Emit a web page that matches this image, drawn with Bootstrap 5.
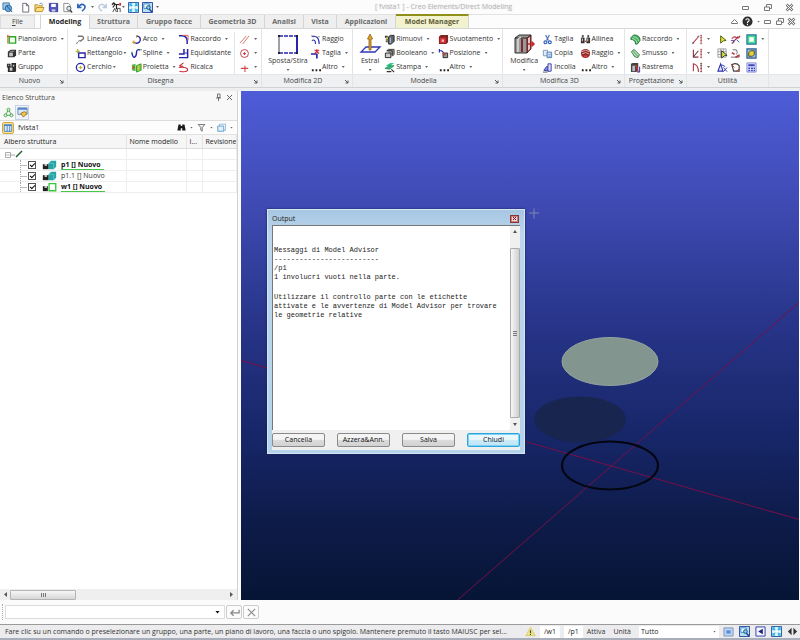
<!DOCTYPE html>
<html lang="it">
<head>
<meta charset="utf-8">
<meta name="viewport" content="width=device-width, initial-scale=1">
<title>Creo Elements/Direct Modeling</title>
<link href="https://cdn.jsdelivr.net/npm/bootstrap@5.3.0/dist/css/bootstrap.min.css" rel="stylesheet">
<style>
body{font-family:"Open Sans","Noto Sans",sans-serif;font-size:7px;line-height:10px;color:#333;background:#fcfcfc}
button,input,select{font:inherit;color:inherit}
button{border:0;background:none;padding:0}
.ic{width:11px;height:11px;flex:none;display:block}
.ic-sm{width:9px;height:9px;flex:none;display:block}
.ic-lg{width:24px;height:24px;flex:none;display:block}
.crt{width:3px;height:2px;flex:none;background:#666;clip-path:polygon(0 0,100% 0,50% 100%)}
.titlebar{display:grid;grid-template-columns:375px 1fr auto;align-items:center;height:14px}
.apptitle{color:#b4b4b4;text-shadow:0 0 2px #ddd;white-space:nowrap}
.qat{gap:3px;padding-left:2px}
.wins{gap:13px;padding-right:6px}
.vwins{gap:3px;padding-right:4px}
.tabs{display:grid;grid-template-columns:35px 5px 50px 48px 63px 64px 39px 33px 59px 73px 1fr;height:15px;border-bottom:1px solid #d4d7da;border-top:1px solid #e2e2e2}
.tb{display:flex;align-items:center;justify-content:center;color:#6a6a6a;font-weight:700;text-decoration:none;background:#efefef;border-right:1px solid #d5d5d5;white-space:nowrap}
.tb.file{font-weight:400;color:#444;border:1px solid #ddd;border-bottom:0}
.tb.on{background:#fff;color:#222;border-left:1px solid #d5d5d5;margin-bottom:-1px}
.tb.mm{background:#f3f2cf;color:#5c5a35;border-top:2px solid #8f8f1c;margin-top:-1px}
.ribbon{display:grid;grid-template-columns:68fr 194fr 91fr 150fr 122fr 62fr 82fr 31fr;height:59px;background:#fff;border-bottom:1px solid #cfd3d6}
.grp{display:flex;flex-direction:column;border-right:1px solid #e2e4e6;min-width:0}
.grpbody{display:grid;flex:1;padding-top:3px}
.grpname{height:13px;background:#eef0f2;border-top:1px solid #e3e5e8;display:flex;align-items:center;justify-content:center;position:relative;color:#444}
.launch{position:absolute;right:3px;top:4px;width:5px;height:5px}
.launch svg{display:block;width:5px;height:5px}
.g-nuovo{grid-template-columns:1fr;padding-left:6px}
.g-dis{grid-template-columns:56fr 48fr 56fr 27fr;padding-left:7px}
.g-m2{grid-template-columns:44fr 42fr;padding-left:4px}
.g-mod{grid-template-columns:28fr 53fr 64fr;padding-left:3px}
.g-m3{grid-template-columns:36fr 37fr 44fr;padding-left:3px}
.g-pro{grid-template-columns:1fr;padding-left:5px}
.g-uti{grid-template-columns:25fr 14fr 16fr 22fr;padding-left:5px}
.stack{display:flex;flex-direction:column;min-width:0}
.stack.sep{border-left:1px solid #e2e4e6;padding-left:4px}
.tool{display:flex;align-items:center;height:14px;gap:1px;white-space:nowrap}
.tool .crt{margin-left:3px}
.big{display:flex;flex-direction:column;align-items:center;height:40px;white-space:nowrap}
.big .crt{margin-top:3px}
.work{flex:1;min-height:0;padding-top:3px;background:linear-gradient(#eceef0 3px,#fcfcfc 3px)}
.panel{width:238px;flex:none;background:#fff;border-right:1px solid #d2d2d2;margin-right:3px;display:flex;flex-direction:column}
.phead{height:13px;padding:0 3px 0 2px;gap:2px;background:#f8f8f8;color:#444}
.ptabs{height:17px;padding:1px;background:#f8f8f8;border-bottom:1px solid #ddd}
.ptab{width:14px;height:15px;display:grid;place-items:center}
.ptab.on{border:1px solid #c9d2e4;background:#edf2fb}
.pbar{height:13px;padding:0 4px 0 2px;gap:4px;background:#fdfdfd;color:#222}
.chip{width:12px;height:12px;border:1px solid #d7a83c;background:#fbe3a0;border-radius:2px}
.chip .ic{width:10px;height:10px}
.tree{width:100%;table-layout:fixed;border-collapse:collapse;color:#333}
.tree th{height:14px;font-weight:400;padding:0 0 0 4px;background:#f6f6f6;border-top:1px solid #e2e2e2;border-bottom:1px solid #dcdcdc;border-right:1px solid #e4e4e4;white-space:nowrap;overflow:hidden;color:#222}
.tree th:not(:first-child){padding-left:3px}
.c-name{width:126px}
.c-model{width:60px}
.c-inst{width:16px}
.tree td{height:11px;padding:0;border-right:1px solid #eee;border-bottom:1px solid #eee;line-height:10px}
.node{display:flex;align-items:center;height:10px;padding-left:20px}
.node .twig{width:7px;align-self:stretch;border-left:1px dotted #aaa;background:linear-gradient(#bbb,#bbb) 0 5px/6px 1px no-repeat}
.node .duo{width:15px;height:10px;margin:0 4px 0 6px}
.node b{color:#111;border-bottom:1px solid #46c846;line-height:8px;padding-right:3px}
.ck{appearance:none;width:8px;height:8px;margin:0 0 0 1px;border:1px solid #555;background:#fff;display:grid;place-items:center}
.ck:checked::after{content:"";width:5px;height:3px;border:solid #111;border-width:0 0 1px 1px;transform:rotate(-45deg);margin-bottom:2px}
.hbar{height:11px;background:#efefef;padding:1px 3px;gap:3px}
.hthumb{width:66px;height:10px;gap:1px;border:1px solid #b4b4b4;border-radius:1px;background:linear-gradient(#f7f7f7,#d6d6d6)}
.ar{width:4px;height:5px;background:#555;flex:none}
.ar.l{clip-path:polygon(100% 0,100% 100%,25% 50%)}
.ar.r{clip-path:polygon(0 0,0 100%,75% 50%)}
.ar.u{height:3px;clip-path:polygon(0 100%,100% 100%,50% 0)}
.ar.d{height:3px;clip-path:polygon(0 0,100% 0,50% 100%)}
.view{flex:1;position:relative;min-width:0;margin-right:1px;overflow:hidden;background:linear-gradient(#4e5cd8 0%,#3f4bb3 22%,#28358a 45%,#172668 68%,#0d1b48 85%,#061535 100%)}
.scene{position:absolute;inset:0;width:100%;height:100%}
.dlg{position:absolute;left:26px;top:118px;width:258px;background:linear-gradient(#a6c6e2,#bcd6ec 10%,#b4d3ea);border:1px solid #d5e6f3;padding:0 4px 3px;color:#222;box-shadow:0 0 2px #141e50}
.dhead{height:15px;padding:2px 1px 0 0}
.dclose{width:9px;height:8px;border:1px solid #8d3434;background:#f0dcdc;display:grid;place-items:center;box-shadow:inset 0 0 0 1px #cf7a76}
.dclose svg{width:5px;height:5px}
.dbody{background:#f0f0f0}
.out{height:205px;background:#fff;border:1px solid #777;border-right:0;border-bottom:0;display:flex}
.log{flex:1;font-family:"Liberation Mono",monospace;font-size:7px;line-height:9px;padding:20px 0 0 1px;color:#222;white-space:pre}
.log p{margin:0 0 11px}
.vbar{width:10px;background:#f0f0f0;padding:4px 0;gap:3px}
.vthumb{width:10px;flex:1;margin:12px 0 2px;border:1px solid #aaa;border-radius:1px;background:linear-gradient(90deg,#f7f7f7,#cfcfcf);display:grid;place-items:center;align-content:center;gap:1px}
.vthumb i{width:4px;height:1px;background:#777}
.hthumb i{width:1px;height:4px;background:#777}
.dbtns{padding:3px 0;display:grid;grid-template-columns:53px 53px 53px 53px;justify-content:space-between}
.dbtn{height:14px;border:1px solid #8a8a8a;border-radius:2px;background:linear-gradient(#f4f4f4 45%,#dcdcdc 50%,#d2d2d2);color:#111}
.dbtn.def{border-color:#2ca4dc;background:linear-gradient(#eaf7fd 45%,#cdebf9 50%,#bfe4f5);box-shadow:inset 0 0 0 1px #7fd4f5}
.cmd{height:24px;padding:0 5px 0 2px;gap:1px;background:#fbfbfb}
.grip{width:2px;height:16px;border-left:1px dotted #aaa}
.combo{width:220px;height:14px;border:1px solid #ddd;background:#fff}
.combo input{border:0;flex:1;min-width:0;height:12px;padding:0 3px;outline:0;background:none}
.combo .ar{width:5px;background:#111}
.cbtn{height:14px;width:16px;border:1px solid #ccc;border-radius:2px;display:grid;place-items:center}
.status{height:16px;background:#ececee;border-top:1px solid #9a9a9a;border-bottom:2px solid #a9aebb;padding:0 2px 0 5px}
.msg{flex:1;min-width:0;overflow:hidden;white-space:nowrap;text-overflow:ellipsis}
.cell{background:#fff;height:12px;padding:1px 4px;color:#222}
.sel{appearance:none;width:80px;height:12px;border:0;border-radius:0;padding:0 2px;background:#fff;color:#222}
.selbox{position:relative}
.selbox .crt{position:absolute;right:3px;top:5px}
.views{gap:5px}
</style>
<script src="https://cdn.jsdelivr.net/npm/bootstrap@5.3.0/dist/js/bootstrap.bundle.min.js"></script>
</head>
<body class="vh-100 d-flex flex-column overflow-hidden">
<svg class="d-none" aria-hidden="true">
<symbol id="app" viewBox="0 0 12 12"><path d="M1 1h7v7H1z" fill="#9cc7e6" stroke="#3b79ad"/><circle cx="7" cy="7" r="3.500" fill="#67aadb" stroke="#2a6397"/><path d="M5 4l6 7" stroke="#234f88"/></symbol>
<symbol id="new" viewBox="0 0 12 12"><path d="M3 1.500h4l2.500 2.500v7H3z" fill="#fff" stroke="#667"/><path d="M7 1.500V4h2.500" fill="none" stroke="#667"/></symbol>
<symbol id="open" viewBox="0 0 12 12"><path d="M1 10V3h3l1 1h4v2" fill="#f6d67c" stroke="#b98e2f"/><path d="M1 10.500l2-4.500h8l-2 4.500z" fill="#ffdf7e" stroke="#b98e2f"/><path d="M6 2q2-2 4 1" fill="none" stroke="#5b8fbd"/></symbol>
<symbol id="save" viewBox="0 0 12 12"><path d="M1.500 1.500h9v9h-8l-1-1z" fill="#5055c0" stroke="#34388f"/><path d="M3.500 2h5v3.500h-5z" fill="#fff"/><path d="M4 8h4v2.500H4z" fill="#ccd"/></symbol>
<symbol id="prev" viewBox="0 0 12 12"><path d="M2 1.500h5l2 2v7H2z" fill="#fff" stroke="#888"/><circle cx="7.500" cy="7" r="2.300" fill="#d9e8f3" stroke="#555"/><path d="M9 9l2 2.500" stroke="#444" stroke-width="1.500"/></symbol>
<symbol id="undo" viewBox="0 0 12 12"><path d="M2 2v4h4M2.500 5.500q4-5 7-1.500 1.500 3-3 6" fill="none" stroke="#2c64b8" stroke-width="1.800"/></symbol>
<symbol id="redo" viewBox="0 0 12 12"><path d="M10 2v4H6M9.500 5.500q-4-5-7-1.500-1.500 3 3 6" fill="none" stroke="#b7c6da" stroke-width="1.500"/></symbol>
<symbol id="axis" viewBox="0 0 12 12"><path d="M1 3l2-2 2 2M3 2l6 1M6 3v5M2 6l2-3" stroke="#222" stroke-width="1.300" fill="none"/><path d="M2 11l2-4 2 4M7 11V7h3v4" stroke="#444" fill="none"/><path d="M9 1h2v3H9z" fill="#c33"/></symbol>
<symbol id="fit" viewBox="0 0 12 12"><path d="M.5.5h11v11H.5z" fill="#dff6ff" stroke="#23509d"/><path d="M2 4.500V2h2.500M7.500 2H10v2.500M10 7.500V10H7.500M4.500 10H2V7.500M2.500 2.500l7 7M9.500 2.500l-7 7" fill="none" stroke="#2bb0e6" stroke-width="1.200"/><path d="M4.500 4.500h3v3h-3z" fill="#fff"/></symbol>
<symbol id="zoomw" viewBox="0 0 12 12"><path d="M.5.5h11v11H.5z" fill="#b9dff3" stroke="#2341a0"/><path d="M2 2h6v5H2z" fill="#e9f8ff" stroke="#3b8cc0"/><circle cx="7" cy="6" r="2" fill="#8cc6e6" stroke="#14508b"/><path d="M8 8l3 3" stroke="#14408b" stroke-width="1.500"/></symbol>
<symbol id="wp" viewBox="0 0 12 12"><path d="M3.500 3h7v7h-7z" fill="#f2fdee" stroke="#29ab29" stroke-width="1.500"/><path d="M2 1v9.500M1 2.500h4" stroke="#b55c22" fill="none"/></symbol>
<symbol id="part" viewBox="0 0 12 12"><path d="M2 4l3-2h6v6l-2 2H2z" fill="#333"/><path d="M3.500 5h4v4h-4z" fill="#c4c4c4"/><path d="M5 3h4.500L8.500 4H4z" fill="#999"/></symbol>
<symbol id="group" viewBox="0 0 12 12"><path d="M1 2h4v3h1V1h5v9l-1 1H2V6H1z" fill="#2b2b2b"/><path d="M4 6h3v3.500H4zM7.500 3H9v2H7.500zM2 3h1.500v1H2z" fill="#ccc"/></symbol>
<symbol id="line" viewBox="0 0 12 12"><path d="M1.500 10.500L5 7" stroke="#777" stroke-width="1.300" stroke-dasharray="2 1"/><path d="M3 2.500h5q2 1 1 3L5.500 8" fill="none" stroke="#777" stroke-width="1.500"/></symbol>
<symbol id="rect" viewBox="0 0 12 12"><path d="M4 5.500h7v5H4z" fill="#fff" stroke="#2424ac" stroke-width="1.500"/><path d="M3 1v5M.5 3.500h5" stroke="#a5b02d" stroke-width="1.200"/></symbol>
<symbol id="circ" viewBox="0 0 12 12"><circle cx="6" cy="6" r="4.500" fill="none" stroke="#2424ac" stroke-width="1.400"/><path d="M6 4v4M4 6h4" stroke="#c2b022" stroke-width="1.300"/></symbol>
<symbol id="arc" viewBox="0 0 12 12"><path d="M6 2q5 1 4 5-2 5-7 2" fill="none" stroke="#2424ac" stroke-width="1.500"/><path d="M1 9h4M3 7v4M6 1v3" stroke="#d1a022" stroke-width="1.200"/></symbol>
<symbol id="spline" viewBox="0 0 12 12"><path d="M1 5q1 6 3 5t2-5 4-3" fill="none" stroke="#2424ac" stroke-width="1.500"/><path d="M9 2h3M1 4v3" stroke="#2a9a6a"/></symbol>
<symbol id="proj" viewBox="0 0 12 12"><path d="M1 3l4-1v8l-4-1z" fill="#58b748"/><path d="M6 4l5-2v7l-5 2z" fill="#7ed045" stroke="#3c9232"/><path d="M1.500 6H4" stroke="#d4451f" stroke-width="2"/><path d="M8 4v5" stroke="#e6d23a"/></symbol>
<symbol id="fillet" viewBox="0 0 12 12"><path d="M1 2h3q6 0 6 6v3" fill="none" stroke="#2424ac" stroke-width="1.600"/><path d="M5 1.500h6V7" fill="none" stroke="#d54"/></symbol>
<symbol id="offset" viewBox="0 0 12 12"><path d="M1 6.500h5.500V1M1 10.500h9.500V1" fill="none" stroke="#2424ac" stroke-width="1.600"/><path d="M7 5.500h3" stroke="#2424ac"/></symbol>
<symbol id="trace" viewBox="0 0 12 12"><path d="M1 6l4-2" stroke="#666"/><path d="M1 6q10-1 9.500 3-1 2.500-9 1M6 1L2 4l5 2" fill="none" stroke="#cf2937" stroke-width="1.200"/></symbol>
<symbol id="constr" viewBox="0 0 12 12"><path d="M1 10L8 2M4 11l7-9" stroke="#cf7060"/></symbol>
<symbol id="ccirc" viewBox="0 0 12 12"><circle cx="6" cy="6" r="4.300" fill="none" stroke="#c6363e"/><path d="M4.500 6h3M6 4.500v3" stroke="#c6363e" stroke-width="1.300"/></symbol>
<symbol id="cpoint" viewBox="0 0 12 12"><path d="M2 7h8M6.500 4v7" stroke="#d0474a" stroke-width="1.200"/></symbol>
<symbol id="stretch" viewBox="0 0 24 24"><path d="M3 4h18v17H3z" fill="#fdfdff"/><path d="M3 4h18M3 21h18" stroke="#2424ac" stroke-width="1.500" stroke-dasharray="4 1"/><path d="M21 4v17" stroke="#2424ac" stroke-width="2"/><path d="M3 4v17" stroke="#444"/><path d="M2 3h2v2H2zM20 3h2v2h-2zM2 20h2v2H2zM20 20h2v2h-2z" fill="#222"/></symbol>
<symbol id="rad2" viewBox="0 0 12 12"><path d="M2 3q8-2 8 8M2 7q4-2 4 4" fill="none" stroke="#2a2aae" stroke-width="1.200"/><path d="M1 2h4M8 3h3" stroke="#999"/></symbol>
<symbol id="trim" viewBox="0 0 12 12"><path d="M1 6.500h6M7.500 6v5.500" stroke="#2424ac" stroke-width="1.800"/><path d="M5 2l5 4M10 2L5 6M7.500 1v4" stroke="#d12c3a" stroke-width="1.200"/></symbol>
<symbol id="dots" viewBox="0 0 12 12"><path d="M2 8h2v2H2zM6 8h2v2H6zM10 8h2v2h-2z" fill="#222"/></symbol>
<symbol id="pull" viewBox="0 0 24 24"><path d="M8 15h14l-5 5H3z" fill="#fff" stroke="#2f37b8" stroke-width="1.300"/><path d="M12 2l2.500 5H13v11h-2V7H9.500z" fill="#e5a321" stroke="#8b5d12" stroke-width=".8"/></symbol>
<symbol id="remove" viewBox="0 0 12 12"><path d="M1 2h3v2H1zM2 5h2v4H2z" fill="#333"/><path d="M5 3l2-1.500h4V8l-3 3H5z" fill="#666" stroke="#222"/><path d="M7 4v6" stroke="#8fb6e0" stroke-width="1.500"/><path d="M3 3v5" stroke="#cc3"/></symbol>
<symbol id="bool" viewBox="0 0 12 12"><path d="M3 3l2-1.500h6V7L9 9" fill="#aaa" stroke="#333"/><path d="M1.500 5.500h6v5h-6z" fill="#ccc" stroke="#222"/><path d="M3 3h6v5" fill="none" stroke="#222"/></symbol>
<symbol id="stamp" viewBox="0 0 12 12"><path d="M2 4l5-3h4L6 5z" fill="#2dc77e"/><path d="M1 7l5-3h5L6 8z" fill="#36b38f" stroke="#183" stroke-width=".7"/><path d="M3 10.500h5M8 8l3 3" stroke="#333" fill="none" stroke-width="1.300"/></symbol>
<symbol id="shell" viewBox="0 0 12 12"><path d="M1 3l2-2h8v8l-2 2H1z" fill="#7c2525"/><path d="M2 4h6.500v6H2z" fill="#d5313a"/><path d="M4 6h2.500v2.500H4z" fill="#fbb"/></symbol>
<symbol id="pos" viewBox="0 0 12 12"><path d="M5.500 5.500h5v5h-5z" fill="#999" stroke="#222"/><path d="M1.500 1v4M1 3h3l2 2" stroke="#2433b4" fill="none" stroke-width="1.300"/><path d="M5 5l3 3" stroke="#c33" stroke-width="1.500"/></symbol>
<symbol id="modify" viewBox="0 0 24 24"><path d="M3 6l4-3h12v14l-4 4H3z" fill="#999" stroke="#333"/><path d="M3 6h12v15M15 6l4-3" stroke="#222" fill="none"/><path d="M6 7v13M9 5l-3 2" stroke="#ddd" stroke-width="1.500"/><path d="M10 7v13" stroke="#7c2a2a" stroke-width="2"/><path d="M15.500 6l3-2v13l-3 3z" fill="#e9c4c4" stroke="#822"/><path d="M16 12h6M19.500 9.500L22 12l-2.500 2.500" stroke="#c62828" stroke-width="1.500" fill="none"/></symbol>
<symbol id="cut" viewBox="0 0 12 12"><path d="M4 1l3 6M8 1L5 7" stroke="#4a72b5" stroke-width="1.300"/><circle cx="3.800" cy="9" r="1.600" fill="none" stroke="#2c62bb" stroke-width="1.300"/><circle cx="8.500" cy="9" r="1.600" fill="none" stroke="#2c62bb" stroke-width="1.300"/></symbol>
<symbol id="copy" viewBox="0 0 12 12"><path d="M1.500 2.500h4.500v6H1.500z" fill="#e0ecf7" stroke="#7898b8"/><path d="M5.500 4.500h5v6h-5z" fill="#cfe4f8" stroke="#4a78b0"/><path d="M7 7h2.500M7 9h2.500" stroke="#4a78b0" stroke-width=".7"/></symbol>
<symbol id="paste" viewBox="0 0 12 12"><path d="M2 9l3-4h3v5z" fill="#7c8bdb" stroke="#333a9e"/><path d="M6.500 2H10v8H6.500z" fill="#dfe3fa" stroke="#333a9e"/><path d="M1 11h5" stroke="#555"/></symbol>
<symbol id="align" viewBox="0 0 12 12"><path d="M1 4h4v6H1zM7 4h4v6H7z" fill="#333"/><path d="M2 1h2v3H2zM8 1h2v3H8z" fill="#555"/><path d="M5 8h2" stroke="#c33" stroke-width="1.500"/><path d="M2 5h1v3H2zM8 5h1v3H8z" fill="#eee"/></symbol>
<symbol id="rad3" viewBox="0 0 12 12"><circle cx="6" cy="6" r="5" fill="#8a2a2a"/><path d="M2 4q4-3 8 0M2 6.500q4-3 8 0" stroke="#f3b0a8" fill="none"/><path d="M4 8h4v2H4z" fill="#e04040"/></symbol>
<symbol id="round" viewBox="0 0 12 12"><path d="M1 4l3-3q7 0 7 6l-3 4H6q0-5-5-5z" fill="#3fae5b" stroke="#2b6e3c"/><path d="M2 5q5 0 5.500 5M3.500 3q5 0 6 5" stroke="#b6efc2" fill="none"/></symbol>
<symbol id="chamf" viewBox="0 0 12 12"><path d="M1.500 4l3-2.500 6 6-2 3-3.500-1z" fill="#74bd83" stroke="#4b7b58"/><path d="M2.500 4.500l5 5M4.500 3l5 5" stroke="#d5f3da"/></symbol>
<symbol id="draft" viewBox="0 0 12 12"><path d="M1 2l2-1h6v8l-2 2H1z" fill="#444"/><path d="M2.500 4h3v6h-3z" fill="#bbb"/><path d="M6.500 3l2.500 8" stroke="#c33" stroke-width="1.500"/><path d="M10.500 5v6H8" stroke="#22a" fill="none"/></symbol>
<symbol id="m1" viewBox="0 0 12 12"><path d="M1 10l6-7" stroke="#b33a4a" stroke-width="1.200"/><path d="M0 10h2M6 2.500h2" stroke="#444"/><path d="M10 1v10M9 1.500h2M9 4h2M9 7h2M9 10.500h2" stroke="#b55a5a"/></symbol>
<symbol id="m2" viewBox="0 0 12 12"><path d="M1.500 2v8H7M2 9l5-6" stroke="#7c3346" fill="none" stroke-width="1.200"/><path d="M10 1v10M9 1.500h2M9 4h2M9 7h2M9 10.500h2" stroke="#b55a5a"/></symbol>
<symbol id="m3" viewBox="0 0 12 12"><path d="M1.500 10V2q5.500 1 5.500 9" stroke="#b0354a" fill="none" stroke-width="1.200"/><path d="M10 1v10M9 1.500h2M9 4h2M9 7h2M9 10.500h2" stroke="#8b4a4a"/></symbol>
<symbol id="m4" viewBox="0 0 12 12"><path d="M4 2l6 5-3 .5L4 10z" fill="#d9e32c" stroke="#4d5516"/></symbol>
<symbol id="m5" viewBox="0 0 12 12"><path d="M1 1h9v9H1zM1 4h9M1 7h9M4 1v9M7 1v9" fill="#fff" stroke="#999"/><path d="M5 3l6 5-3 .5L5 11z" fill="#d9e32c" stroke="#333"/></symbol>
<symbol id="m6" viewBox="0 0 12 12"><path d="M4 2l2.500 8H1z" fill="#e5e8ff" stroke="#2a30ac" stroke-width="1.200"/><path d="M7 6l4 4.500M11 6l-4 4.500M5 3l4 2" stroke="#2a30ac"/></symbol>
<symbol id="m7" viewBox="0 0 12 12"><path d="M2 5q3-3 5-1t4-2M2 10.500l7-8" stroke="#b03344" fill="none" stroke-width="1.200"/><path d="M1 7h3v3M7 6l3 3" stroke="#2e46b5" fill="none"/></symbol>
<symbol id="m8" viewBox="0 0 12 12"><path d="M3 2h4q2 3 0 5M1 10h9V7" stroke="#666" fill="none"/><path d="M2 5l3 2M6 10l4-2" stroke="#c12e3e" stroke-width="1.800" fill="none"/></symbol>
<symbol id="m9" viewBox="0 0 12 12"><path d="M2 3q5-3 8 1v6H4z" fill="none" stroke="#444" stroke-width="1.300"/><path d="M1 2l4 4M7 10l4-3" stroke="#c33"/></symbol>
<symbol id="m10" viewBox="0 0 12 12"><path d="M1 1h10v10H1z" fill="#3fe08a" stroke="#2d6fa8" stroke-width="1.300"/><path d="M3.500 3.500h5v5h-5z" fill="#fff"/></symbol>
<symbol id="m11" viewBox="0 0 12 12"><path d="M1 1h10v10H1z" fill="#9db8cc" stroke="#2d5f98" stroke-width="1.300"/><path d="M3 5l2-2h4v4L7 9H3z" fill="#e0d52c" stroke="#444"/></symbol>
<symbol id="m12" viewBox="0 0 12 12"><path d="M1 1h10v10H1z" fill="#e3e7ff" stroke="#7c86d8"/><path d="M2.500 2.500h7v2h-7zM2.500 6h2v1.500h-2zM5.500 6h2v1.500h-2zM8.300 6h1.500v1.500H8.300zM2.500 8.500h2V10h-2zM5.500 8.500h2V10h-2zM8.300 8.500h1.500V10H8.300z" fill="#3a45b8"/></symbol>
<symbol id="min" viewBox="0 0 9 9"><path d="M1.500 3.500h6v3h-6z" fill="#fff" stroke="#777"/></symbol>
<symbol id="rest" viewBox="0 0 9 9"><path d="M3.500 1.500h5v4h-5z" fill="#fff" stroke="#777"/><path d="M1.500 4h5v3.500h-5z" fill="#fff" stroke="#777"/></symbol>
<symbol id="cls" viewBox="0 0 12 12"><path d="M2 2l8 8M10 2l-8 8" stroke="#777" stroke-width="3.500"/><path d="M2.200 2.200l7.600 7.600M9.800 2.200L2.200 9.800" stroke="#fff" stroke-width="1.300"/></symbol>
<symbol id="up" viewBox="0 0 9 9"><path d="M1.500 6.500v-1L4.500 2.500l3 3v1z" fill="#fff" stroke="#777"/></symbol>
<symbol id="help" viewBox="0 0 12 12"><circle cx="6" cy="6" r="5.500" fill="#2d2d2d"/><path d="M4.200 4.700Q4.300 3 6 3t1.800 1.500Q7.800 5.500 6 6.500V7.500M6 8.500V10" stroke="#fff" stroke-width="1.200" fill="none"/></symbol>
<symbol id="pin" viewBox="0 0 9 9"><path d="M3.500 1v3.500h2.500V1zM2 5h5M4.500 5v3" fill="none" stroke="#666" stroke-width=".9"/></symbol>
<symbol id="x" viewBox="0 0 9 9"><path d="M2 2l5 5M7 2L2 7" stroke="#666"/></symbol>
<symbol id="tri" viewBox="0 0 12 12"><path d="M6 3L2.500 9h7z" fill="none" stroke="#43a047"/><circle cx="6" cy="3" r="1.600" fill="#e3f6df" stroke="#43a047"/><circle cx="2.700" cy="9" r="1.600" fill="#e3f6df" stroke="#43a047"/><circle cx="9.300" cy="9" r="1.600" fill="#e3f6df" stroke="#43a047"/></symbol>
<symbol id="brush" viewBox="0 0 12 12"><path d="M1 1h10v7H1z" fill="#dce9fa" stroke="#6686b4"/><path d="M1 1h10v2H1z" fill="#5785c8"/><path d="M4 7l4-2 3 2-4 4z" fill="#f0c44b" stroke="#9b751c"/></symbol>
<symbol id="cols" viewBox="0 0 12 12"><path d="M1.500 2h9v8h-9z" fill="#dcecfb" stroke="#3f78b8"/><path d="M1.500 3h9M5 3v7M8 3v7" stroke="#3f78b8"/></symbol>
<symbol id="sheet" viewBox="0 0 12 12"><path d="M3.500 1.500h8v8h-8z" fill="#fff" stroke="#7da6d0"/><path d="M1 4h8v7H1z" fill="#e3f0fb" stroke="#3f8ac0"/></symbol>
<symbol id="bino" viewBox="0 0 12 12"><path d="M2 2h3v2h2V2h3l1.500 8H7V7H5v3H.5z" fill="#1b1b1b"/></symbol>
<symbol id="funnel" viewBox="0 0 12 12"><path d="M1.500 2h9L7 6v5L5 9.500V6z" fill="#eee" stroke="#555"/></symbol>
<symbol id="pa" viewBox="0 0 18 12"><path d="M1 5h7v6H1z" fill="#222"/><path d="M3 5h3v2H3z" fill="#ddd"/><path d="M8 4l3-3h6v7l-3 3H8z" fill="#27a5a5"/><path d="M8.500 4H14v7" fill="none" stroke="#5fcaca"/></symbol>
<symbol id="pw" viewBox="0 0 18 12"><path d="M1 5h6v6H1z" fill="#222"/><path d="M3 5h3v2H3z" fill="#ddd"/><path d="M8.500 2h8v8.500h-8z" fill="#fff" stroke="#3cc43c" stroke-width="1.600"/></symbol>
<symbol id="enter" viewBox="0 0 12 12"><path d="M11 3v3.500H2M5 3.500l-3 3 3 3" fill="none" stroke="#888" stroke-width="1.400"/></symbol>
<symbol id="xx" viewBox="0 0 12 12"><path d="M2 2l8 8M10 2l-8 8" stroke="#888" stroke-width="1.200"/></symbol>
<symbol id="warn" viewBox="0 0 12 12"><path d="M6 1.500l5 9H1z" fill="#efe68a" stroke="#d6ca62"/><path d="M6 4.500v3M6 8.500v1.300" stroke="#444" stroke-width="1.200"/></symbol>
<symbol id="s1" viewBox="0 0 12 12"><path d="M1 2h10v9H1z" fill="#a9c5ee" stroke="#8a9cba"/><path d="M3 4h6v5H3z" fill="#5b92e0" stroke="#dbe8fa"/></symbol>
<symbol id="s3" viewBox="0 0 12 12"><path d="M1 1h10v10H1z" fill="#f4f6ff" stroke="#2b37a0"/><path d="M8.500 3v6L3.500 6z" fill="#1a237e"/></symbol>
<symbol id="s5" viewBox="0 0 12 12"><path d="M5 2v8L1 6zM7 2v8l4-4z" fill="#333"/></symbol>
<symbol id="corner" viewBox="0 0 5 5"><path d="M1 1l3 3M4 1.500V4H1.500" fill="none" stroke="#555"/></symbol>
</svg>

<header class="titlebar">
  <div class="qat d-flex align-items-center">
    <svg class="ic"><use href="#app"/></svg>
    <button class="ms-1" aria-label="Nuovo"><svg class="ic"><use href="#new"/></svg></button>
    <button aria-label="Apri"><svg class="ic"><use href="#open"/></svg></button>
    <button aria-label="Salva"><svg class="ic"><use href="#save"/></svg></button>
    <button aria-label="Anteprima"><svg class="ic"><use href="#prev"/></svg></button>
    <button aria-label="Annulla" class="d-flex align-items-center gap-1"><svg class="ic"><use href="#undo"/></svg><span class="crt"></span></button>
    <button aria-label="Ripeti"><svg class="ic"><use href="#redo"/></svg></button>
    <button aria-label="Assi" class="d-flex align-items-center"><svg class="ic"><use href="#axis"/></svg><span class="crt"></span></button>
    <button aria-label="Adatta"><svg class="ic"><use href="#fit"/></svg></button>
    <button aria-label="Zoom finestra"><svg class="ic"><use href="#zoomw"/></svg></button>
    <button aria-label="Personalizza" class="crt"></button>
  </div>
  <div class="apptitle">[ fvista1 ] - Creo Elements/Direct Modeling</div>
  <div class="wins d-flex">
    <button aria-label="Riduci"><svg class="ic-sm"><use href="#min"/></svg></button>
    <button aria-label="Ripristina"><svg class="ic-sm"><use href="#rest"/></svg></button>
    <button aria-label="Chiudi"><svg class="ic-sm"><use href="#cls"/></svg></button>
  </div>
</header>

<nav class="tabs">
  <a class="tb file" href="#"><span><u>F</u>ile</span></a><span></span>
  <a class="tb on" href="#">Modeling</a><a class="tb" href="#">Struttura</a><a class="tb" href="#">Gruppo facce</a><a class="tb" href="#">Geometria 3D</a><a class="tb" href="#">Analisi</a><a class="tb" href="#">Vista</a><a class="tb" href="#">Applicazioni</a><a class="tb mm" href="#">Model Manager</a>
  <div class="vwins d-flex align-items-center justify-content-end">
    <button aria-label="Comprimi"><svg class="ic-sm"><use href="#up"/></svg></button>
    <button class="d-flex align-items-center gap-1" aria-label="Guida"><svg class="ic"><use href="#help"/></svg><span class="crt"></span></button>
    <button aria-label="Riduci vista"><svg class="ic-sm"><use href="#min"/></svg></button>
    <button aria-label="Ripristina vista"><svg class="ic-sm"><use href="#rest"/></svg></button>
    <button aria-label="Chiudi vista"><svg class="ic-sm"><use href="#cls"/></svg></button>
  </div>
</nav>

<div class="ribbon">
  <section class="grp"><div class="grpbody g-nuovo"><div class="stack">
    <button class="tool"><svg class="ic"><use href="#wp"/></svg>Pianolavoro<span class="crt"></span></button>
    <button class="tool"><svg class="ic"><use href="#part"/></svg>Parte</button>
    <button class="tool"><svg class="ic"><use href="#group"/></svg>Gruppo</button></div></div>
    <div class="grpname pe-2">Nuovo<button class="launch" aria-label="Opzioni Nuovo"><svg><use href="#corner"/></svg></button></div></section>
  <section class="grp"><div class="grpbody g-dis">
    <div class="stack">
    <button class="tool"><svg class="ic"><use href="#line"/></svg>Linea/Arco</button>
    <button class="tool"><svg class="ic"><use href="#rect"/></svg>Rettangolo<span class="crt ms-0"></span></button>
    <button class="tool"><svg class="ic"><use href="#circ"/></svg>Cerchio<span class="crt ms-0"></span></button></div>
    <div class="stack">
    <button class="tool"><svg class="ic"><use href="#arc"/></svg>Arco<span class="crt"></span></button>
    <button class="tool"><svg class="ic"><use href="#spline"/></svg>Spline<span class="crt"></span></button>
    <button class="tool"><svg class="ic"><use href="#proj"/></svg>Proietta<span class="crt"></span></button></div>
    <div class="stack">
    <button class="tool"><svg class="ic"><use href="#fillet"/></svg>Raccordo<span class="crt"></span></button>
    <button class="tool"><svg class="ic"><use href="#offset"/></svg>Equidistante</button>
    <button class="tool"><svg class="ic"><use href="#trace"/></svg>Ricalca</button></div>
    <div class="stack sep">
    <button class="tool" aria-label="Linea di costruzione"><svg class="ic"><use href="#constr"/></svg><span class="crt"></span></button>
    <button class="tool" aria-label="Cerchio di costruzione"><svg class="ic"><use href="#ccirc"/></svg><span class="crt"></span></button>
    <button class="tool" aria-label="Punto"><svg class="ic"><use href="#cpoint"/></svg><span class="crt"></span></button></div></div>
    <div class="grpname pe-2">Disegna<button class="launch" aria-label="Opzioni Disegna"><svg><use href="#corner"/></svg></button></div></section>
  <section class="grp"><div class="grpbody g-m2">
    <button class="big"><svg class="ic-lg"><use href="#stretch"/></svg>Sposta/Stira<span class="crt"></span></button>
    <div class="stack">
    <button class="tool"><svg class="ic"><use href="#rad2"/></svg>Raggio</button>
    <button class="tool"><svg class="ic"><use href="#trim"/></svg>Taglia<span class="crt"></span></button>
    <button class="tool"><svg class="ic"><use href="#dots"/></svg>Altro<span class="crt"></span></button></div></div>
    <div class="grpname pe-2">Modifica 2D<button class="launch" aria-label="Opzioni Modifica 2D"><svg><use href="#corner"/></svg></button></div></section>
  <section class="grp"><div class="grpbody g-mod">
    <button class="big"><svg class="ic-lg"><use href="#pull"/></svg>Estrai<span class="crt"></span></button>
    <div class="stack">
    <button class="tool"><svg class="ic"><use href="#remove"/></svg>Rimuovi<span class="crt"></span></button>
    <button class="tool"><svg class="ic"><use href="#bool"/></svg>Booleano<span class="crt"></span></button>
    <button class="tool"><svg class="ic"><use href="#stamp"/></svg>Stampa<span class="crt"></span></button></div>
    <div class="stack">
    <button class="tool"><svg class="ic"><use href="#shell"/></svg>Svuotamento<span class="crt"></span></button>
    <button class="tool"><svg class="ic"><use href="#pos"/></svg>Posizione<span class="crt"></span></button>
    <button class="tool"><svg class="ic"><use href="#dots"/></svg>Altro<span class="crt"></span></button></div></div>
    <div class="grpname pe-2">Modella<button class="launch" aria-label="Opzioni Modella"><svg><use href="#corner"/></svg></button></div></section>
  <section class="grp"><div class="grpbody g-m3">
    <button class="big"><svg class="ic-lg"><use href="#modify"/></svg>Modifica<span class="crt"></span></button>
    <div class="stack">
    <button class="tool"><svg class="ic"><use href="#cut"/></svg>Taglia</button>
    <button class="tool"><svg class="ic"><use href="#copy"/></svg>Copia</button>
    <button class="tool"><svg class="ic"><use href="#paste"/></svg>Incolla</button></div>
    <div class="stack">
    <button class="tool"><svg class="ic"><use href="#align"/></svg>Allinea</button>
    <button class="tool"><svg class="ic"><use href="#rad3"/></svg>Raggio<span class="crt"></span></button>
    <button class="tool"><svg class="ic"><use href="#dots"/></svg>Altro<span class="crt"></span></button></div></div>
    <div class="grpname pe-2">Modifica 3D<button class="launch" aria-label="Opzioni Modifica 3D"><svg><use href="#corner"/></svg></button></div></section>
  <section class="grp"><div class="grpbody g-pro"><div class="stack">
    <button class="tool"><svg class="ic"><use href="#round"/></svg>Raccordo<span class="crt"></span></button>
    <button class="tool"><svg class="ic"><use href="#chamf"/></svg>Smusso<span class="crt"></span></button>
    <button class="tool"><svg class="ic"><use href="#draft"/></svg>Rastrema</button></div></div>
    <div class="grpname pe-2">Progettazione<button class="launch" aria-label="Opzioni Progettazione"><svg><use href="#corner"/></svg></button></div></section>
  <section class="grp"><div class="grpbody g-uti">
    <div class="stack">
    <button class="tool" aria-label="Misura distanza"><svg class="ic"><use href="#m1"/></svg><span class="crt"></span></button>
    <button class="tool" aria-label="Misura angolo"><svg class="ic"><use href="#m2"/></svg><span class="crt"></span></button>
    <button class="tool" aria-label="Misura raggio"><svg class="ic"><use href="#m3"/></svg><span class="crt"></span></button></div>
    <div class="stack">
    <button class="tool" aria-label="Seleziona"><svg class="ic"><use href="#m4"/></svg></button>
    <button class="tool" aria-label="Seleziona lista"><svg class="ic"><use href="#m5"/></svg></button>
    <button class="tool" aria-label="Scala"><svg class="ic"><use href="#m6"/></svg></button></div>
    <div class="stack">
    <button class="tool" aria-label="Verifica"><svg class="ic"><use href="#m7"/></svg></button>
    <button class="tool" aria-label="Confronta"><svg class="ic"><use href="#m8"/></svg></button>
    <button class="tool" aria-label="Ripara"><svg class="ic"><use href="#m9"/></svg></button></div>
    <div class="stack">
    <button class="tool" aria-label="Piano attivo"><svg class="ic"><use href="#m10"/></svg><span class="crt"></span></button>
    <button class="tool" aria-label="Parte attiva"><svg class="ic"><use href="#m11"/></svg></button>
    <button class="tool" aria-label="Calcolatrice"><svg class="ic"><use href="#m12"/></svg></button></div></div>
    <div class="grpname">Utilità</div></section>
  <section class="grp border-0"><div class="grpbody"></div><div class="grpname"></div></section>
</div>

<main class="work d-flex">
  <aside class="panel">
    <div class="phead d-flex align-items-center"><span class="me-auto">Elenco Struttura</span>
      <button aria-label="Blocca"><svg class="ic-sm"><use href="#pin"/></svg></button><button aria-label="Chiudi pannello"><svg class="ic-sm"><use href="#x"/></svg></button></div>
    <div class="ptabs d-flex"><button class="ptab" aria-label="Struttura"><svg class="ic"><use href="#tri"/></svg></button><button class="ptab on" aria-label="Aspetto"><svg class="ic"><use href="#brush"/></svg></button></div>
    <div class="pbar d-flex align-items-center"><span class="chip"><svg class="ic"><use href="#cols"/></svg></span><span class="me-auto">fvista1</span>
      <button class="d-flex align-items-center gap-1" aria-label="Cerca"><svg class="ic-sm"><use href="#bino"/></svg><span class="crt"></span></button>
      <button class="d-flex align-items-center gap-1" aria-label="Filtra"><svg class="ic-sm"><use href="#funnel"/></svg><span class="crt"></span></button>
      <button class="d-flex align-items-center gap-1" aria-label="Colonne"><svg class="ic-sm"><use href="#sheet"/></svg><span class="crt"></span></button></div>
    <table class="tree">
      <colgroup><col class="c-name"><col class="c-model"><col class="c-inst"><col></colgroup>
      <thead><tr><th>Albero struttura</th><th>Nome modello</th><th>I...</th><th>Revisione</th></tr></thead>
      <tbody>
      <tr><td><svg width="26" height="10" viewBox="0 0 26 10" class="d-block"><path d="M5.500 3.500h5v5h-5zM6.500 6h3M11 6h4" fill="none" stroke="#aaa"/><path d="M16 8l6-6" stroke="#1c5c2c" stroke-width="1.500"/></svg></td><td></td><td></td><td></td></tr>
      <tr><td><div class="node"><span class="twig"></span><input class="ck" type="checkbox" id="n1" checked><svg class="duo"><use href="#pa"/></svg><label for="n1"><b>p1 [] Nuovo</b></label></div></td><td></td><td></td><td></td></tr>
      <tr><td><div class="node"><span class="twig"></span><input class="ck" type="checkbox" id="n2" checked><svg class="duo"><use href="#pa"/></svg><label for="n2">p1.1 [] Nuovo</label></div></td><td></td><td></td><td></td></tr>
      <tr><td><div class="node"><span class="twig"></span><input class="ck" type="checkbox" id="n3" checked><svg class="duo"><use href="#pw"/></svg><label for="n3"><b>w1 [] Nuovo</b></label></div></td><td></td><td></td><td></td></tr>
      </tbody>
    </table>
    <div class="hbar d-flex align-items-center mt-auto"><span class="ar l"></span><span class="hthumb d-flex align-items-center justify-content-center"><i></i><i></i><i></i></span><span class="ar r ms-auto"></span></div>
  </aside>
  <div class="view">
    <svg class="scene" viewBox="0 0 558 510" preserveAspectRatio="xMidYMid slice">
      <ellipse cx="339" cy="329" rx="46" ry="23" fill="#17254f"/>
      <path d="M0 270L558 429M216 510L558 212" stroke="#780f48" stroke-width="1"/>
      <ellipse cx="369" cy="271" rx="48" ry="24" fill="#83958f" stroke="#94a49d"/>
      <ellipse cx="369" cy="375" rx="48" ry="24" fill="none" stroke="#03060f" stroke-width="2"/>
      <path d="M288 122.500h10M293 118v10" stroke="#8088b4"/>
    </svg>
    <section class="dlg" role="dialog" aria-label="Output">
      <div class="dhead d-flex align-items-center justify-content-between"><span>Output</span><button class="dclose" aria-label="Chiudi finestra"><svg viewBox="0 0 5 5"><path d="M1 1l3 3M4 1L1 4" stroke="#712" stroke-width="1"/></svg></button></div>
      <div class="dbody">
        <div class="out"><div class="log"><p>Messaggi di Model Advisor
-------------------------
/p1
1 involucri vuoti nella parte.</p><p>Utilizzare il controllo parte con le etichette
attivate e le avvertenze di Model Advisor per trovare
le geometrie relative</p></div>
        <div class="vbar d-flex flex-column align-items-center"><span class="ar u"></span><span class="vthumb"><i></i><i></i><i></i></span><span class="ar d"></span></div></div>
        <div class="dbtns"><button class="dbtn">Cancella</button><button class="dbtn">Azzera&amp;Ann.</button><button class="dbtn">Salva</button><button class="dbtn def">Chiudi</button></div>
      </div>
    </section>
  </div>
</main>

<form class="cmd d-flex align-items-center">
  <span class="grip"></span>
  <div class="combo d-flex align-items-center pe-1"><input type="text" aria-label="Riga di comando"><span class="ar d"></span></div>
  <button type="button" class="cbtn" aria-label="Invio"><svg class="ic"><use href="#enter"/></svg></button>
  <button type="button" class="cbtn" aria-label="Annulla comando"><svg class="ic"><use href="#xx"/></svg></button>
</form>
<footer class="status d-flex align-items-center">
  <span class="msg">Fare clic su un comando o preselezionare un gruppo, una parte, un piano di lavoro, una faccia o uno spigolo. Mantenere premuto il tasto MAIUSC per sel...</span>
  <svg class="ic me-1"><use href="#warn"/></svg>
  <span class="cell">/w1</span><span class="cell ms-1">/p1</span>
  <span class="ms-1">Attiva</span><span class="ms-2 me-2">Unità</span>
  <span class="selbox"><select class="sel" aria-label="Filtro"><option>Tutto</option></select><span class="crt"></span></span>
  <div class="views d-flex ms-1">
    <button aria-label="Schermo"><svg class="ic"><use href="#s1"/></svg></button>
    <button aria-label="Zoom"><svg class="ic"><use href="#zoomw"/></svg></button>
    <button aria-label="Precedente"><svg class="ic"><use href="#s3"/></svg></button>
    <button aria-label="Adatta vista"><svg class="ic"><use href="#fit"/></svg></button>
    <button aria-label="Scorri"><svg class="ic"><use href="#s5"/></svg></button>
  </div>
</footer>
</body>
</html>
